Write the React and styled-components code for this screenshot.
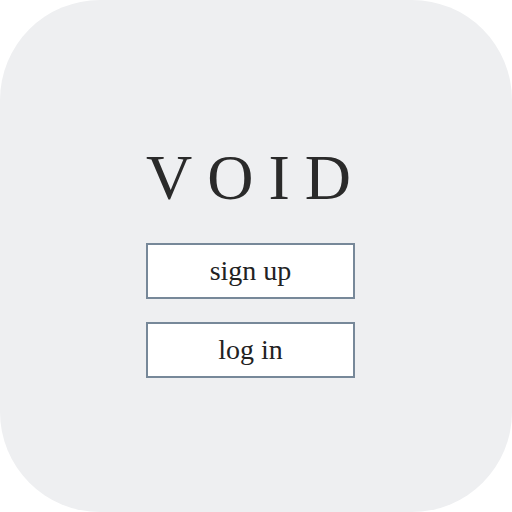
import React from 'react'
import styled, { createGlobalStyle } from 'styled-components'

const GlobalStyle = createGlobalStyle`
  html, body {
    margin: 0;
    padding: 0;
    background: #ffffff;
  }
  body {
    font-family: "Liberation Serif", "Times New Roman", serif;
  }
`

const Screen = styled.div`
  width: 512px;
  height: 512px;
  background: #ffffff;
`

const Card = styled.main`
  box-sizing: border-box;
  width: 512px;
  height: 512px;
  border-radius: 100px;
  background: #eeeff1;
  display: flex;
  flex-direction: column;
  align-items: center;
  padding: 146px 11px 0 0;
`

const Title = styled.h1`
  margin: 0 0 33px;
  font-family: "Liberation Serif", "Times New Roman", serif;
  font-weight: 400;
  font-size: 64px;
  line-height: 64px;
  letter-spacing: 15px;
  padding-left: 11px;
  color: #2a2a2a;
`

const Actions = styled.div`
  display: flex;
  flex-direction: column;
  gap: 23px;
`

const Button = styled.button`
  box-sizing: border-box;
  width: 209px;
  height: 56px;
  border: 2px solid #778899;
  background: #ffffff;
  color: #222222;
  font-family: "Liberation Serif", "Times New Roman", serif;
  font-size: 28px;
  padding: 0;
  cursor: pointer;
`

export default function App() {
  return (
    <Screen>
      <GlobalStyle />
      <Card>
        <Title>VOID</Title>
        <Actions>
          <Button>sign up</Button>
          <Button>log in</Button>
        </Actions>
      </Card>
    </Screen>
  )
}
